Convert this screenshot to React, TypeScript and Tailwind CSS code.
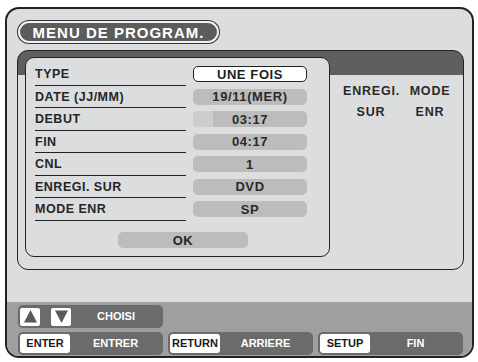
import React from "react";

const rows: { label: string; value: string; kind?: "white" | "slider" }[] = [
  { label: "TYPE", value: "UNE FOIS", kind: "white" },
  { label: "DATE (JJ/MM)", value: "19/11(MER)" },
  { label: "DEBUT", value: "03:17", kind: "slider" },
  { label: "FIN", value: "04:17" },
  { label: "CNL", value: "1" },
  { label: "ENREGI. SUR", value: "DVD" },
  { label: "MODE ENR", value: "SP" },
];

function Tri({ down }: { down?: boolean }) {
  return (
    <svg width="13" height="13" viewBox="0 0 13 13">
      {down ? (
        <polygon points="0,0.5 13,0.5 6.5,13" fill="#5a5a5a" />
      ) : (
        <polygon points="6.5,0 13,12.5 0,12.5" fill="#5a5a5a" />
      )}
    </svg>
  );
}

export default function App() {
  return (
    <div className="w-[478px] h-[362px] bg-white pt-[7px] pl-[5px] font-['Liberation_Sans',Arial,sans-serif] font-bold">
      <div className="w-[469px] h-[351px] border-2 border-[#222] rounded-[14px] bg-[#dcdddf] overflow-hidden flex flex-col">
        {/* title */}
        <div className="pl-[11px] pt-[12px]">
          <div className="w-[201px] h-[22px] rounded-full bg-[#5c5c5c] border-2 border-[#f2f2f2] shadow-[0_0_0_1px_#333] flex items-center justify-center text-white text-[15px] tracking-[1px] leading-none">
            MENU DE PROGRAM.
          </div>
        </div>

        {/* main panel */}
        <div className="ml-[10px] mt-[7px] w-[447px] h-[220px] border border-[#222] rounded-[11px] bg-[linear-gradient(to_bottom,#5f5f5f_24px,#dcdddf_24px)] pt-[6px] pl-[7px] flex">
          <div className="w-[305px] h-[200px] border border-[#222] rounded-[9px] bg-[#dcdddf] pt-[5px] pl-[9px] flex flex-col">
            {rows.map((r) => (
              <div key={r.label} className="h-[22.5px] flex items-stretch">
                <div className="w-[151px] border-b border-[#222] flex items-center text-[12.5px] tracking-[0.5px] text-[#262626] leading-none pt-[1px]">
                  {r.label}
                </div>
                <div className="ml-[7px] flex items-center">
                  {r.kind === "white" ? (
                    <div className="w-[114px] h-[16px] rounded-[5px] bg-white border border-[#222] flex items-center justify-center text-[13px] tracking-[0.6px] text-[#222] leading-none">
                      {r.value}
                    </div>
                  ) : r.kind === "slider" ? (
                    <div className="w-[114px] h-[16px] rounded-[5px] bg-[#bcbcbc] overflow-hidden relative flex items-center justify-center text-[13px] tracking-[0.6px] text-[#2a2a2a] leading-none">
                      <div className="absolute left-0 top-0 bottom-0 w-[20px] bg-[#cdcdcd]" />
                      <span className="relative">{r.value}</span>
                    </div>
                  ) : (
                    <div className="w-[114px] h-[16px] rounded-[5px] bg-[#bcbcbc] flex items-center justify-center text-[13px] tracking-[0.6px] text-[#2a2a2a] leading-none">
                      {r.value}
                    </div>
                  )}
                </div>
              </div>
            ))}
            <div className="mt-[11.5px] ml-[83px] w-[130px] h-[16px] rounded-[5px] bg-[#bcbcbc] flex items-center justify-center text-[13px] tracking-[0.6px] text-[#262626] leading-none">
              OK
            </div>
          </div>

          {/* right info */}
          <div className="pl-[13px] pt-[23px] flex flex-col text-[12.5px] tracking-[0.8px] text-[#2a2a2a] leading-none">
            <div className="h-[21.5px] flex items-center gap-[3px]">
              <div className="w-[56px] text-center">ENREGI.</div>
              <div className="w-[56px] text-center">MODE</div>
            </div>
            <div className="h-[21.5px] flex items-center gap-[3px]">
              <div className="w-[56px] text-center">SUR</div>
              <div className="w-[56px] text-center">ENR</div>
            </div>
          </div>
        </div>

        {/* bottom bar */}
        <div className="mt-auto h-[54px] bg-[#9e9fa0] pt-[3px] pb-[1px] pl-[11px] flex flex-col gap-[4px] text-[11px] leading-none">
          <div className="h-[23px] flex">
            <div className="w-[145px] h-[23px] rounded-[5px] bg-[#6b6b6b] flex items-center px-[2px]">
              <div className="w-[20px] h-[18px] bg-white rounded-[2px] flex items-center justify-center">
                <Tri />
              </div>
              <div className="ml-[11px] w-[20px] h-[18px] bg-white rounded-[2px] flex items-center justify-center">
                <Tri down />
              </div>
              <div className="flex-1 text-center text-white">CHOISI</div>
            </div>
          </div>
          <div className="h-[23px] flex gap-[5px]">
            {[
              ["ENTER", "ENTRER"],
              ["RETURN", "ARRIERE"],
              ["SETUP", "FIN"],
            ].map(([k, v]) => (
              <div key={k} className="w-[145px] h-[23px] rounded-[5px] bg-[#6b6b6b] flex items-center px-[2px]">
                <div className="w-[50px] h-[19px] bg-white rounded-[3px] flex items-center justify-center text-[#1a1a1a]">
                  {k}
                </div>
                <div className="flex-1 text-center text-white">{v}</div>
              </div>
            ))}
          </div>
        </div>
      </div>
    </div>
  );
}
